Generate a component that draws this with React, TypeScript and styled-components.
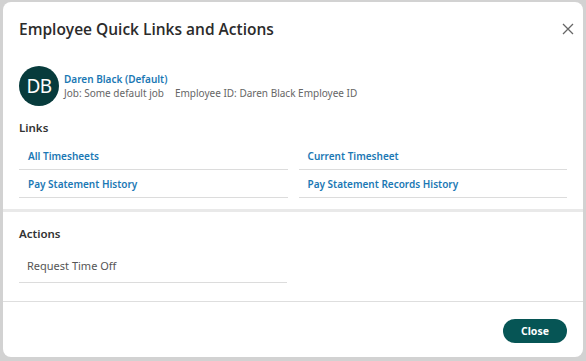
import React from 'react';
import styled, { createGlobalStyle } from 'styled-components';

const GlobalStyle = createGlobalStyle`
    html, body {
        margin: 0;
        padding: 0;
        background: #d2d2d2;
        font-family: "Noto Sans", "Open Sans", sans-serif;
    }
`;

const Page = styled.div`
    width: 586px;
    height: 361px;
    box-sizing: border-box;
    padding: 2px 3px 4px 3px;
`;

const Modal = styled.div`
    height: 100%;
    background: #fff;
    border-radius: 8px;
    display: flex;
    flex-direction: column;
    overflow: hidden;
`;

const Header = styled.div`
    display: flex;
    align-items: center;
    justify-content: space-between;
    padding: 16px 8px 0 16px;
    height: 22px;
`;

const Title = styled.h1`
    margin: 0;
    font-family: "Open Sans", sans-serif;
    font-size: 15.5px;
    font-weight: 600;
    color: #2b2b2b;
`;

const CloseIcon = styled.button`
    border: none;
    background: none;
    padding: 0;
    width: 14px;
    height: 14px;
    display: flex;
    cursor: pointer;
`;

const Body = styled.div`
    padding: 0 16px;
    flex: 1;
`;

const Employee = styled.div`
    display: flex;
    align-items: center;
    gap: 5px;
    margin-top: 26px;
`;

const Avatar = styled.div`
    width: 40px;
    height: 40px;
    border-radius: 50%;
    background: #073b3c;
    color: #fff;
    display: flex;
    align-items: center;
    justify-content: center;
    font-size: 19px;
    letter-spacing: -0.5px;
`;

const Name = styled.div`
    font-size: 10px;
    font-weight: 600;
    color: #1b78b4;
    line-height: 14px;
`;

const Meta = styled.div`
    font-size: 10px;
    color: #666;
    line-height: 15px;
    display: flex;
    gap: 11px;
`;

const SectionTitle = styled.div<{ $top: number }>`
    font-size: 11.5px;
    font-weight: 600;
    color: #333;
    margin-top: ${p => p.$top}px;
    line-height: 16px;
`;

const LinkGrid = styled.div`
    display: grid;
    grid-template-columns: 1fr 1fr;
    column-gap: 11px;
    margin-top: 6px;
`;

const LinkItem = styled.a`
    display: block;
    font-size: 10px;
    font-weight: 600;
    color: #1b78b4;
    padding: 7px 9px 5px;
    line-height: 15px;
    border-bottom: 1px solid #dcdcdc;
    text-decoration: none;
`;

const Divider = styled.div<{ $size: number }>`
    height: ${p => p.$size}px;
    background: #e9e9e9;
`;

const ActionItem = styled.div`
    width: 268px;
    box-sizing: border-box;
    font-size: 11px;
    color: #555;
    padding: 16px 8px 8px;
    line-height: 16px;
    border-bottom: 1px solid #dcdcdc;
`;

const Footer = styled.div`
    border-top: 1px solid #dedede;
    display: flex;
    justify-content: flex-end;
    padding: 17px 16px 14px;
`;

const CloseButton = styled.button`
    background: #065555;
    color: #fff;
    border: none;
    border-radius: 12px;
    width: 64px;
    height: 24px;
    font-family: "Noto Sans", sans-serif;
    font-size: 10.5px;
    font-weight: 700;
    cursor: pointer;
`;

const links = [
    'All Timesheets',
    'Current Timesheet',
    'Pay Statement History',
    'Pay Statement Records History',
];

const App = () => (
    <>
        <GlobalStyle/>
        <Page>
            <Modal>
                <Header>
                    <Title>Employee Quick Links and Actions</Title>
                    <CloseIcon aria-label="Close">
                        <svg width="14" height="14" viewBox="0 0 14 14">
                            <path d="M2 2 L12 12 M12 2 L2 12" stroke="#666" strokeWidth="1.3" fill="none"/>
                        </svg>
                    </CloseIcon>
                </Header>
                <Body>
                    <Employee>
                        <Avatar>DB</Avatar>
                        <div>
                            <Name>Daren Black (Default)</Name>
                            <Meta>
                                <span>Job: Some default job</span>
                                <span>Employee ID: Daren Black Employee ID</span>
                            </Meta>
                        </div>
                    </Employee>
                    <SectionTitle $top={14}>Links</SectionTitle>
                    <LinkGrid>
                        {links.map(l => <LinkItem key={l}>{l}</LinkItem>)}
                    </LinkGrid>
                </Body>
                <Divider $size={3} style={{ marginTop: 11 }}/>
                <Body>
                    <SectionTitle $top={14}>Actions</SectionTitle>
                    <ActionItem>Request Time Off</ActionItem>
                </Body>
                <Footer>
                    <CloseButton>Close</CloseButton>
                </Footer>
            </Modal>
        </Page>
    </>
);

export default App;
